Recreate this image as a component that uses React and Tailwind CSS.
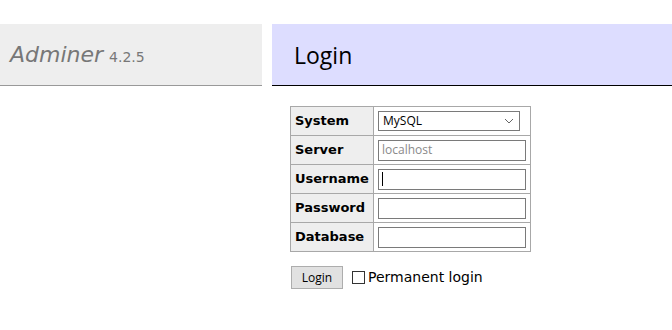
import React from "react";

const fields = [
  { label: "System", type: "select" },
  { label: "Server", type: "text", placeholder: "localhost" },
  { label: "Username", type: "text", focus: true },
  { label: "Password", type: "password" },
  { label: "Database", type: "text" },
];

const App = () => {
  return (
    <div className="min-h-screen bg-white pt-[24px] font-['DejaVu_Sans',Verdana,sans-serif] text-black">
      <div className="flex">
        <div className="w-[262px] h-[62px] bg-[#eeeeee] border-b border-[#999999] flex items-center pl-[10px] shrink-0">
          <span className="italic text-[22px] text-[#777777]">Adminer</span>
          <span className="text-[14px] text-[#777777] ml-[6px] mt-[5px]">4.2.5</span>
        </div>
        <div className="flex-1 ml-[10px] h-[62px] bg-[#ddddff] border-b border-black flex items-center pl-[22px]">
          <h2 className="text-[23px] font-['Open_Sans',sans-serif] mt-[1px]">Login</h2>
        </div>
      </div>

      <div className="ml-[290px] mt-[20px]">
        <table className="border-collapse border-t border-l border-[#a8a8a8] text-[13px]">
          <tbody>
            {fields.map((f) => (
              <tr key={f.label} className="h-[29px]">
                <th className="bg-[#eeeeee] text-left font-bold px-[4px] border-r border-b border-[#a8a8a8] w-[83px]">
                  {f.label}
                </th>
                <td className="px-[4px] border-r border-b border-[#a8a8a8] w-[155px]">
                  {f.type === "select" ? (
                    <div className="w-[142px] h-[20px] border border-[#7a7a7a] flex items-center justify-between px-[4px] text-[12px] font-['Open_Sans',sans-serif]">
                      <span>MySQL</span>
                      <svg width="10" height="6" viewBox="0 0 10 6" className="mr-[1px]">
                        <path d="M1 1 L5 5 L9 1" fill="none" stroke="#666" strokeWidth="1" />
                      </svg>
                    </div>
                  ) : (
                    <div className="w-[148px] h-[21px] border border-[#7a7a7a] flex items-center px-[3px] text-[12px] font-['Open_Sans',sans-serif] text-[#8a8a8a]">
                      {f.placeholder}
                      {f.focus && <span className="w-[1px] h-[14px] bg-black" />}
                    </div>
                  )}
                </td>
              </tr>
            ))}
          </tbody>
        </table>

        <div className="flex items-center mt-[14px] ml-[1px]">
          <button className="w-[52px] h-[23px] bg-[#e1e1e1] border border-[#adadad] text-[12px] font-['Open_Sans',sans-serif]">
            Login
          </button>
          <span className="ml-[9px] w-[13px] h-[13px] border border-[#333333] bg-white" />
          <span className="ml-[3px] text-[14px]">Permanent login</span>
        </div>
      </div>
    </div>
  );
};

export default App;
